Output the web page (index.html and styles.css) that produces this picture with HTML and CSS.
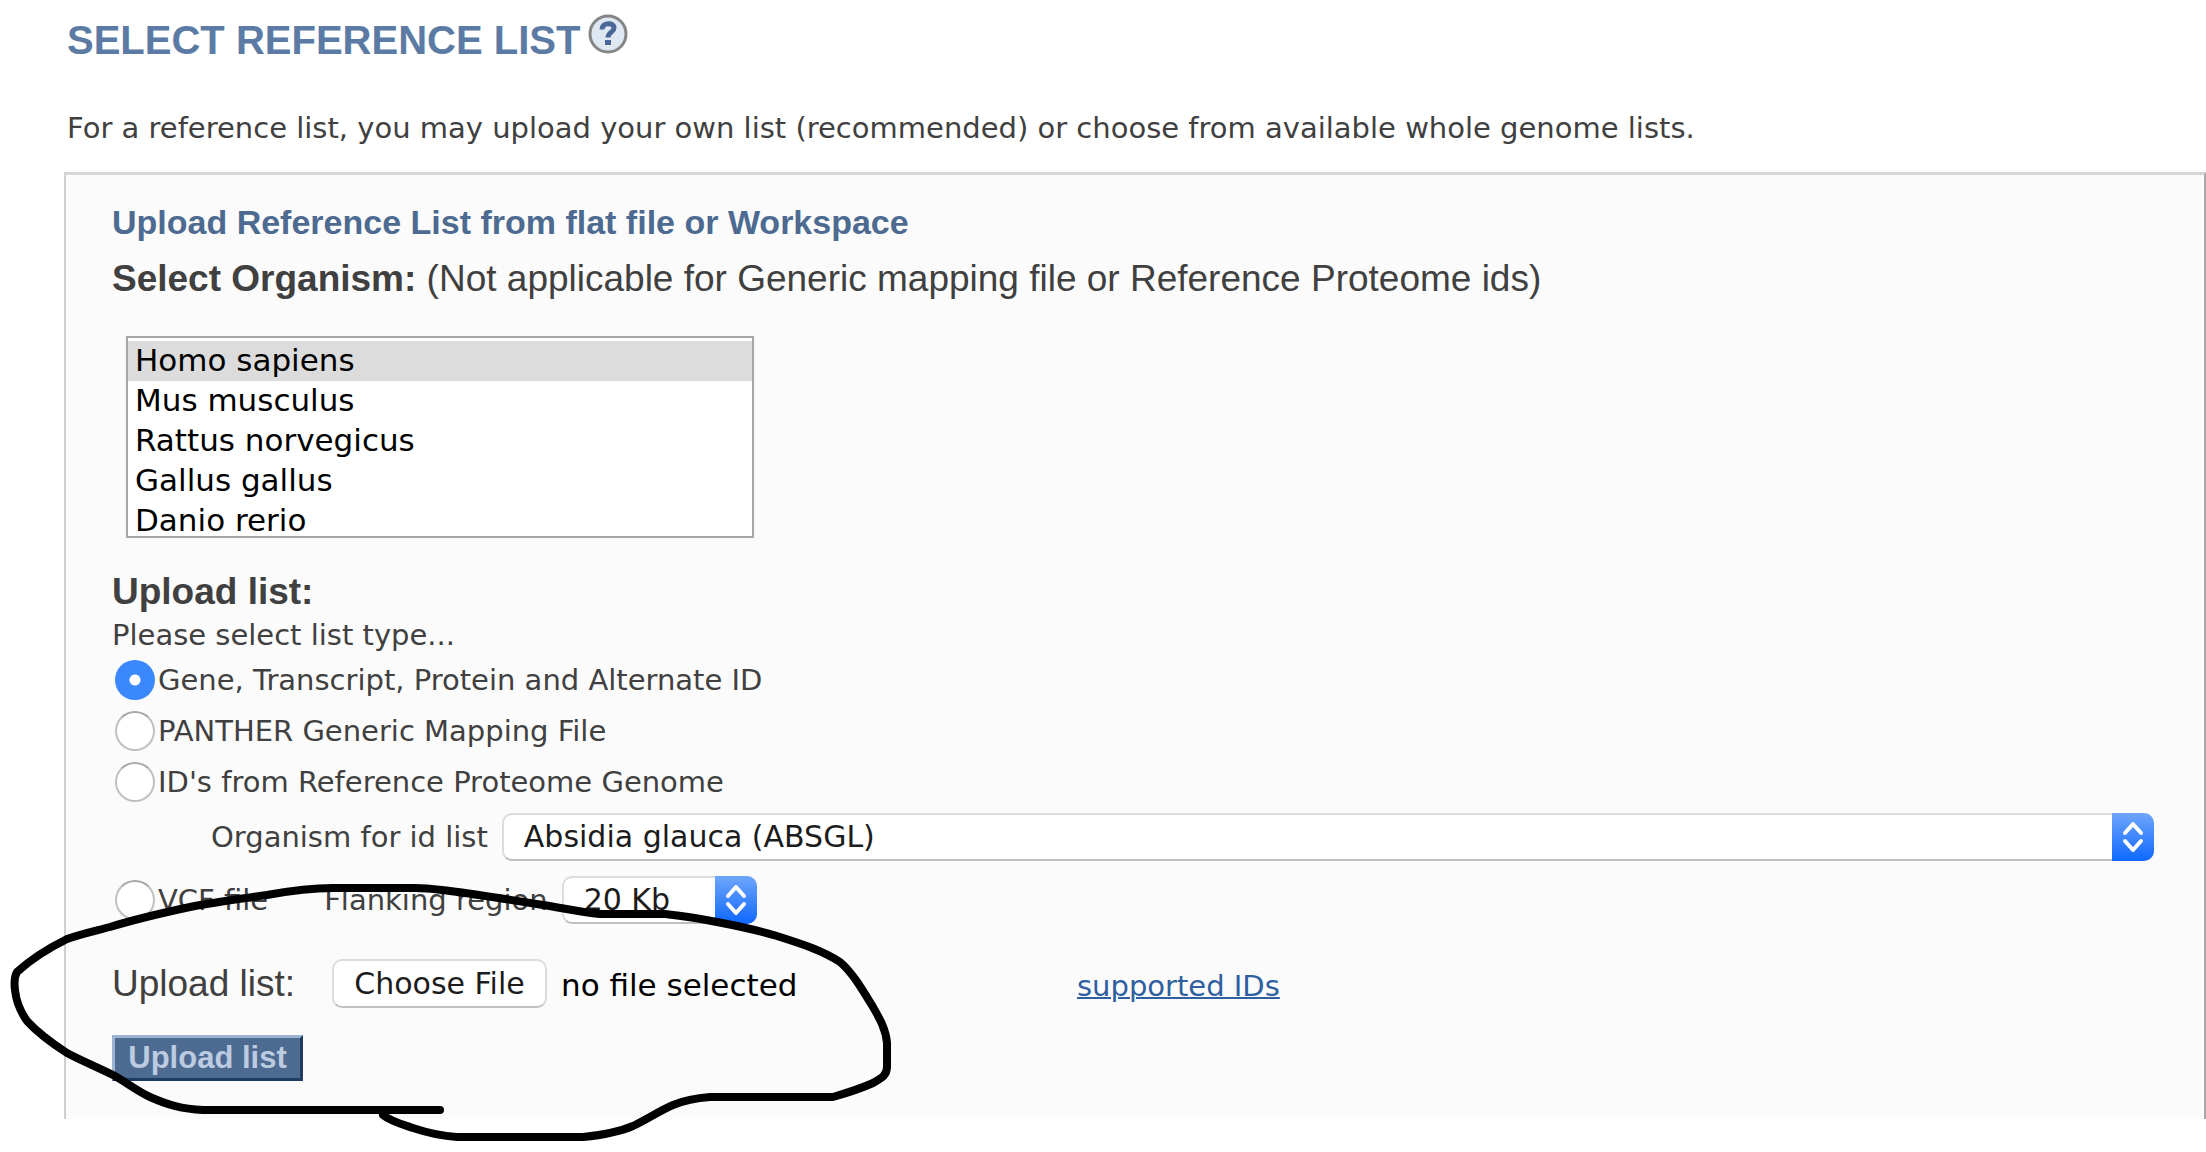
FILE: index.html
```html
<!DOCTYPE html>
<html lang="en">
<head>
<meta charset="utf-8">
<title>Select Reference List</title>
<link rel="stylesheet" href="styles.css">
</head>
<body>
<main class="page">
  <h1 class="title">SELECT REFERENCE LIST
    <a class="help" href="#help" aria-label="Help">
      <svg viewBox="0 0 40 40" aria-hidden="true">
        <circle cx="20" cy="20" r="18" fill="#dfe7f2" stroke="#858585" stroke-width="3"/>
        <path d="M14 15.500 C14 8 26 8 26 14 C26 18 20 18.500 20 23.500" fill="none" stroke="#4a6896" stroke-width="5"/>
        <rect x="17" y="26" width="6" height="5" fill="#4a6896"/>
      </svg>
    </a>
  </h1>
  <p class="intro">For a reference list, you may upload your own list (recommended) or choose from available whole genome lists.</p>

  <form class="panel">
    <h2 class="panel-title">Upload Reference List from flat file or Workspace</h2>
    <label class="organism-label" for="organism"><b>Select Organism:</b> (Not applicable for Generic mapping file or Reference Proteome ids)</label>
    <select class="organisms" id="organism" size="5">
      <option selected>Homo sapiens</option>
      <option>Mus musculus</option>
      <option>Rattus norvegicus</option>
      <option>Gallus gallus</option>
      <option>Danio rerio</option>
    </select>

    <h3 class="section-title">Upload list:</h3>
    <p class="hint">Please select list type...</p>
    <label class="choice"><input class="radio" type="radio" name="type" checked>Gene, Transcript, Protein and Alternate ID</label>
    <label class="choice"><input class="radio" type="radio" name="type">PANTHER Generic Mapping File</label>
    <label class="choice"><input class="radio" type="radio" name="type">ID's from Reference Proteome Genome</label>
    <div class="proteome">
      <label for="proteome">Organism for id list</label>
      <span class="dropdown dropdown-wide">
        <select class="dropdown-box" id="proteome"><option>Absidia glauca (ABSGL)</option></select>
        <svg class="arrows" viewBox="0 0 42 48" aria-hidden="true"><path d="M13 20 L21 11 L29 20 M13 28 L21 37 L29 28"/></svg>
      </span>
    </div>
    <div class="vcf">
      <label class="choice"><input class="radio" type="radio" name="type">VCF file</label>
      <label class="flank-label" for="flank">Flanking region</label>
      <span class="dropdown">
        <select class="dropdown-box" id="flank"><option>20 Kb</option></select>
        <svg class="arrows" viewBox="0 0 42 48" aria-hidden="true"><path d="M13 20 L21 11 L29 20 M13 28 L21 37 L29 28"/></svg>
      </span>
    </div>

    <div class="upload">
      <label class="upload-label" for="file">Upload list:</label>
      <div class="file">
        <button class="file-button" type="button" id="file">Choose File</button>
        <span class="file-name">no file selected</span>
      </div>
      <a class="link" href="#ids">supported IDs</a>
    </div>
    <button class="submit" type="submit">Upload list</button>
  </form>

  <svg class="scribble" viewBox="0 0 900 270" aria-hidden="true">
    <path d="M440 240 H203 C182 239 168 235 150 227 C137 221 126 212 113 205 C97 197 82 191 67 183 C50 172 38 163 27 151 C20 141 16 131 15 120 C14 112 14 107 17 102 C30 90 47 79 67 69 C81 64 95 61 110 57 C136 49 162 43 190 37 C215 32 240 29 267 25 C289 21 310 18 333 18 H415 C430 18 440 20 450 21 C481 25 512 30 543 35 C562 38 581 42 600 44 H665 C685 46 702 49 717 52 C738 56 757 60 777 66 C799 73 822 80 840 92 C852 102 862 119 873 137 C880 149 886 160 887 173 V197 C887 205 882 208 873 213 C862 218 850 222 833 227 H710 C697 228 685 230 673 235 C659 241 648 249 633 256 C619 262 603 265 583 267 H457 C442 266 428 263 413 258 C401 254 390 251 383 245"/>
  </svg>
</main>
</body>
</html>
```
FILE: styles.css
```css
* { box-sizing: border-box; }

body {
  margin: 0;
  background: #fff;
  color: #404040;
  font: 29px/40px Verdana, "DejaVu Sans", sans-serif;
}

h1, h2, h3, p { margin: 0; }

.page {
  position: relative;
  padding: 12px 0 33px 64px;
}

.title {
  display: flex;
  align-items: flex-start;
  gap: 8px;
  padding-left: 3px;
  color: #5b7ba5;
  font: bold 40px/56px Arial, "Liberation Sans", sans-serif;
}

.help {
  width: 40px;
  height: 40px;
  margin-top: 2px;
}

.help svg { display: block; }

.intro {
  padding: 40px 0 24px 3px;
}

.panel {
  display: flex;
  flex-direction: column;
  align-items: flex-start;
  padding: 25px 50px 38px 46px;
  background: #fbfbfb;
  border-top: 3px solid #d6d6d6;
  border-left: 2px solid #d0d0d0;
  border-right: 2px solid #a8a8a8;
}

.panel-title {
  color: #4d6a91;
  font: bold 34px/44px Arial, "Liberation Sans", sans-serif;
}

.organism-label,
.section-title,
.upload-label {
  font-family: Arial, "Liberation Sans", sans-serif;
  font-size: 37px;
  line-height: 44px;
}

.organism-label { margin-top: 13px; }

.organisms {
  width: 628px;
  height: 202px;
  margin: 35px 0 32px 14px;
  padding: 3px 0 0;
  overflow: hidden;
  border: 2px solid #a6a6a6;
  border-radius: 0;
  outline: 0;
  background: #fff;
  color: #000;
  font: 31px/40px Verdana, "DejaVu Sans", sans-serif;
}

.organisms option {
  height: 40px;
  padding: 1px 0 0 7px;
}

.organisms option:checked {
  background: #dcdcdc linear-gradient(#dcdcdc, #dcdcdc);
  color: #000;
}

.hint { padding-top: 2px; line-height: 38px; }

.choice {
  display: flex;
  align-items: center;
  gap: 3px;
  height: 51px;
}

.radio {
  appearance: none;
  width: 40px;
  height: 40px;
  margin: 0 0 0 3px;
  border: 2px solid #c0c0c0;
  border-top-color: #a8a8a8;
  border-radius: 50%;
  background: #fff;
}

.radio:checked {
  border: 0;
  background: radial-gradient(circle, #fff 5px, #3b87fd 6px);
}

.proteome,
.vcf {
  display: flex;
  align-items: center;
}

.proteome {
  align-self: stretch;
  gap: 14px;
  margin: 6px 0 14px;
  padding-left: 99px;
}

.vcf { height: 50px; }

.flank-label { margin: 0 14px 0 56px; }

.dropdown {
  position: relative;
  display: flex;
  width: 195px;
  height: 48px;
}

.dropdown-wide { flex: 1; }

.dropdown-box {
  appearance: none;
  width: 100%;
  padding: 0 50px 0 20px;
  border: 2px solid #dcdcdc;
  border-bottom-color: #c0c0c0;
  border-radius: 10px;
  background: #fff;
  color: #1c1c1c;
  font: 30px/40px Verdana, "DejaVu Sans", sans-serif;
}

.arrows {
  position: absolute;
  top: 0;
  right: 0;
  width: 42px;
  height: 48px;
  border-radius: 0 10px 10px 0;
  background: linear-gradient(#6ea6fb, #0f68ff);
  fill: none;
  stroke: #fff;
  stroke-width: 4;
  stroke-linecap: round;
  stroke-linejoin: round;
  pointer-events: none;
}

.upload {
  display: grid;
  grid-template-columns: 220px 745px auto;
  align-items: center;
  margin-top: 34px;
}

.file {
  display: flex;
  align-items: center;
  gap: 14px;
}

.file-button {
  width: 215px;
  height: 49px;
  padding: 0;
  border: 2px solid #dcdcdc;
  border-bottom-color: #c0c0c0;
  border-radius: 10px;
  background: #fff;
  color: #1c1c1c;
  font: 30px/40px Verdana, "DejaVu Sans", sans-serif;
}

.file-name {
  padding-top: 2px;
  color: #000;
  font-size: 31px;
}

.link {
  padding-top: 4px;
  color: #2f5f9f;
  text-decoration-thickness: 2px;
}

.submit {
  width: 191px;
  height: 46px;
  margin-top: 27px;
  padding: 0;
  border: 3px solid;
  border-color: #9db4d2 #1f3c64 #1f3c64 #9db4d2;
  background: #4d6a91;
  color: #bccbe0;
  font: bold 31px/36px Arial, "Liberation Sans", sans-serif;
}

/* Hand-drawn loop around the upload controls */
.scribble {
  position: absolute;
  top: 870px;
  left: 0;
  width: 900px;
  height: 270px;
  overflow: visible;
  fill: none;
  stroke: #000;
  stroke-width: 8;
  stroke-linecap: round;
  stroke-linejoin: round;
  pointer-events: none;
}
```
